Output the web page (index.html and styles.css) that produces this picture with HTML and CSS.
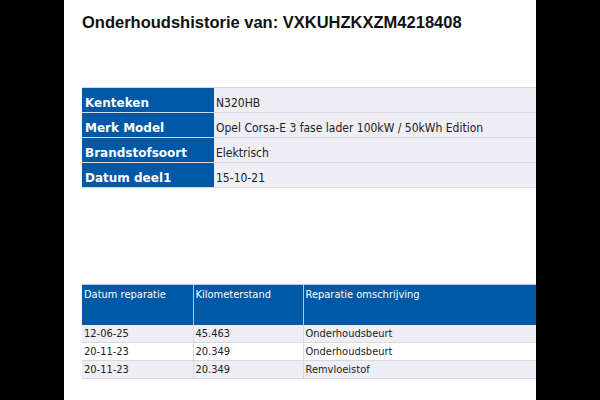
FILE: index.html
```html
<!DOCTYPE html>
<html>
<head>
<meta charset="utf-8">
<link rel="stylesheet" href="styles.css">
</head>
<body>
<div class="page">
  <h1 class="title">Onderhoudshistorie van: VXKUHZKXZM4218408</h1>
  <table class="info">
    <tr><th>Kenteken</th><td>N320HB</td></tr>
    <tr><th>Merk Model</th><td>Opel Corsa-E 3 fase lader 100kW / 50kWh Edition</td></tr>
    <tr><th>Brandstofsoort</th><td>Elektrisch</td></tr>
    <tr><th>Datum deel1</th><td>15-10-21</td></tr>
  </table>
  <table class="history">
    <tr class="head"><th class="c1">Datum reparatie</th><th class="c2">Kilometerstand</th><th class="c3">Reparatie omschrijving</th></tr>
    <tr class="alt"><td>12-06-25</td><td>45.463</td><td>Onderhoudsbeurt</td></tr>
    <tr><td>20-11-23</td><td>20.349</td><td>Onderhoudsbeurt</td></tr>
    <tr class="alt"><td>20-11-23</td><td>20.349</td><td>Remvloeistof</td></tr>
  </table>
</div>
</body>
</html>
```

FILE: styles.css
```css
html, body {
  margin: 0;
  padding: 0;
  background: #000;
  height: 400px;
  overflow: hidden;
}
.page {
  margin-left: 64px;
  width: 472px;
  height: 400px;
  background: #fff;
  overflow: hidden;
  padding-left: 18px;
  box-sizing: border-box;
}
.title {
  margin: 0;
  padding-top: 12px;
  font-family: "Liberation Sans", Arial, sans-serif;
  font-weight: bold;
  font-size: 16.5px;
  line-height: 20px;
  color: #111;
  white-space: nowrap;
}
table {
  border-collapse: collapse;
  white-space: nowrap;
}
.info {
  margin-top: 55px;
  width: 480px;
  table-layout: fixed;
}
.info th {
  width: 129px;
  background: #0058a6;
  color: #fff;
  font-family: "DejaVu Sans", Verdana, sans-serif;
  font-size: 12px;
  font-weight: bold;
  text-align: left;
  vertical-align: bottom;
  padding: 0 0 2px 3px;
  height: 22px;
  border-top: 1px solid #d8d8e2;
  border-bottom: 1px solid #d8d8e2;
}
.info td {
  background: #eeeef4;
  color: #222;
  font-family: "DejaVu Sans Condensed", "DejaVu Sans", sans-serif;
  font-size: 12px;
  vertical-align: bottom;
  padding: 0 0 2px 2px;
  height: 22px;
  border-top: 1px solid #d8d8e2;
  border-bottom: 1px solid #d8d8e2;
}
.history {
  margin-top: 96px;
  width: 480px;
  table-layout: fixed;
  font-family: "DejaVu Sans Condensed", "DejaVu Sans", sans-serif;
  font-size: 11px;
}
.history th {
  background: #0058a6;
  color: #fff;
  font-weight: normal;
  text-align: left;
  vertical-align: top;
  height: 40px;
  padding: 3px 0 0 2px;
  box-sizing: border-box;
  border-top: 1px solid #b8c8dc;
  border-right: 1px solid #b8c8dc;
}
.history .c1 { width: 111px; }
.history .c2 { width: 110px; }
.history td {
  color: #222;
  height: 17px;
  padding: 0 0 0 2px;
  vertical-align: middle;
  border-bottom: 1px solid #d8d8e2;
  border-right: 1px solid #d8d8e2;
}
.history tr.alt td {
  background: #eeeef4;
}
```
